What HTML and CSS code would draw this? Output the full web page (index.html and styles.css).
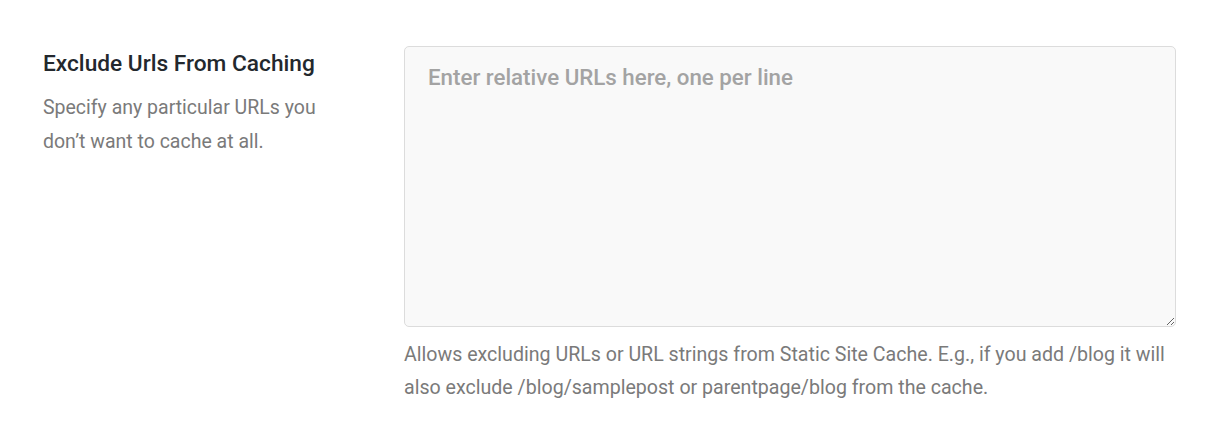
FILE: index.html
```html
<!DOCTYPE html>
<html>
<head>
<meta charset="utf-8">
<link rel="stylesheet" href="styles.css">
</head>
<body>
<div class="row">
  <div class="label-col">
    <h3 class="title">Exclude Urls From Caching</h3>
    <p class="desc">Specify any particular URLs you don’t want to cache at all.</p>
  </div>
  <div class="field-col">
    <textarea class="input" placeholder="Enter relative URLs here, one per line"></textarea>
    <p class="help">Allows excluding URLs or URL strings from Static Site Cache. E.g., if you add /blog it will also exclude /blog/samplepost or parentpage/blog from the cache.</p>
  </div>
</div>
</body>
</html>
```
FILE: styles.css
```css
html, body {
  margin: 0;
  padding: 0;
  background: #ffffff;
  font-family: Roboto, "Liberation Sans", sans-serif;
}
.row {
  display: flex;
  padding: 46px 44px 0 43px;
  gap: 34px;
}
.label-col {
  width: 327px;
  flex: none;
}
.title {
  margin: 3px 0 0 0;
  font-size: 22.7px;
  font-weight: 500;
  color: #23282d;
  line-height: 30px;
}
.desc {
  margin: 12px 0 0 0;
  width: 300px;
  font-size: 19.5px;
  line-height: 34px;
  color: #7a7a7a;
}
.field-col {
  flex: 1;
}
.input {
  display: block;
  box-sizing: border-box;
  width: 772px;
  height: 281px;
  margin: 0;
  padding: 14px 23px;
  border: 1px solid #dcdcdc;
  border-radius: 5px;
  background: #f9f9f9;
  font-family: Roboto, "Liberation Sans", sans-serif;
  font-size: 22.3px;
  font-weight: 500;
  line-height: 32px;
  color: #333;
  resize: vertical;
  outline: none;
}
.input::placeholder {
  color: #a3a3a3;
}
.help {
  margin: 11px 0 0 0;
  width: 790px;
  font-size: 19.6px;
  line-height: 33px;
  color: #7a7a7a;
}
```
